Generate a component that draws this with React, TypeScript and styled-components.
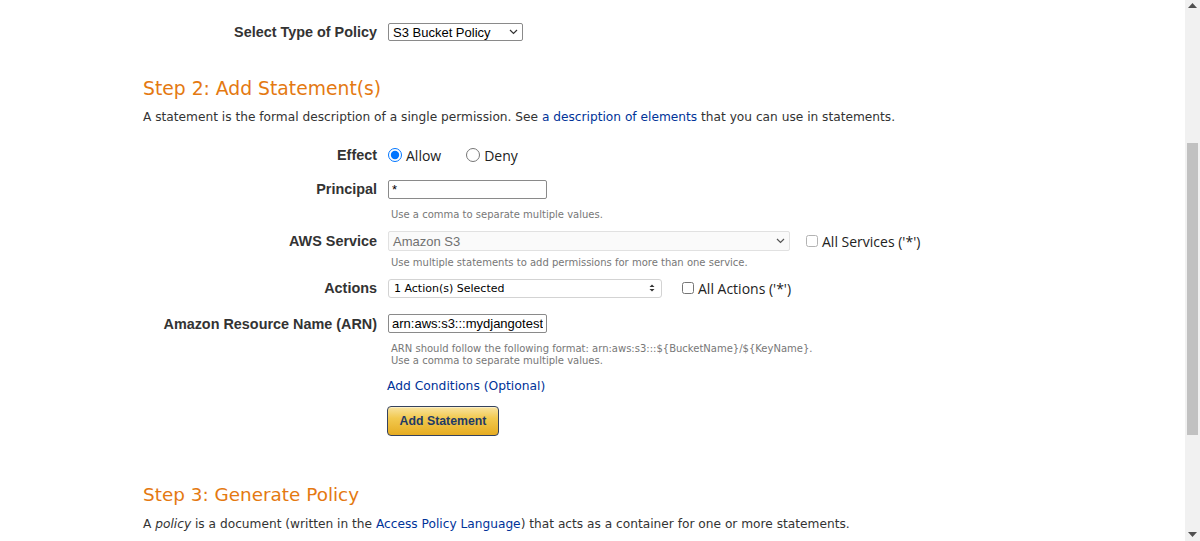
import React from "react";
import styled, { createGlobalStyle } from "styled-components";

const Global = createGlobalStyle`
  html, body { margin: 0; padding: 0; background: #fff; overflow: hidden; }
  body { font-family: "DejaVu Sans", Verdana, sans-serif; color: #333; }
`;

const Page = styled.div`
  width: 1185px;
  height: 541px;
  padding-left: 143px;
  box-sizing: border-box;
  display: flex;
  flex-direction: column;
`;

const Row = styled.div<{ $mt: number; $h?: number }>`
  display: grid;
  grid-template-columns: 234px 1fr;
  column-gap: 11px;
  align-items: center;
  margin-top: ${(p) => p.$mt}px;
  height: ${(p) => (p.$h ? `${p.$h}px` : "auto")};
`;

const Label = styled.div`
  font-family: "Liberation Sans", Arial, sans-serif;
  font-weight: bold;
  font-size: 14.4px;
  color: #333;
  text-align: right;
  white-space: nowrap;
`;

const Controls = styled.div`
  display: flex;
  align-items: center;
  height: 100%;
`;

const SelectBox = styled.div<{ $w: number; $h: number; $variant: "plain" | "disabled" | "multi" }>`
  width: ${(p) => p.$w}px;
  height: ${(p) => p.$h}px;
  box-sizing: border-box;
  display: flex;
  align-items: center;
  justify-content: space-between;
  border: 1px solid
    ${(p) => (p.$variant === "plain" ? "#8a8a8a" : p.$variant === "disabled" ? "#e1e1e1" : "#d3d3d3")};
  border-radius: ${(p) => (p.$variant === "multi" ? 3 : 2)}px;
  background: ${(p) => (p.$variant === "disabled" ? "#fafafa" : "#fff")};
  padding: 0 ${(p) => (p.$variant === "multi" ? 6 : 4)}px 0 ${(p) => (p.$variant === "multi" ? 5 : 4)}px;
  font-family: ${(p) =>
    p.$variant === "multi" ? `"DejaVu Sans", Tahoma, sans-serif` : `"Liberation Sans", Arial, sans-serif`};
  font-size: ${(p) => (p.$variant === "multi" ? "11px" : "13px")};
  color: ${(p) => (p.$variant === "disabled" ? "#707070" : "#000")};
`;

const Heading = styled.h2<{ $mt: number; $size: number }>`
  margin: ${(p) => p.$mt}px 0 0 0;
  font-family: "DejaVu Sans", Verdana, sans-serif;
  font-weight: normal;
  font-size: ${(p) => p.$size}px;
  line-height: 24px;
  color: #e47911;
`;

const Para = styled.p<{ $mt: number }>`
  margin: ${(p) => p.$mt}px 0 0 0;
  font-size: 12.2px;
  line-height: 16px;
  color: #333;
  white-space: nowrap;
`;

const Link = styled.a`
  color: #003399;
  text-decoration: none;
`;

const RadioLabel = styled.label<{ $ml?: number }>`
  display: flex;
  align-items: center;
  margin-left: ${(p) => p.$ml || 0}px;
  font-family: "Open Sans", "Noto Sans", sans-serif;
  font-size: 14px;
  color: #222;
  input { margin: 0 4px 0 0; width: 14px; height: 14px; }
`;

const TextInput = styled.input`
  width: 159px;
  height: 19px;
  box-sizing: border-box;
  border: 1px solid #8a8a8a;
  border-radius: 2px;
  padding: 0 3px;
  font-family: "Liberation Sans", Arial, sans-serif;
  font-size: 13px;
  color: #000;
  margin: 0;
`;

const HintRow = styled.div<{ $mt: number }>`
  display: grid;
  grid-template-columns: 234px 1fr;
  column-gap: 11px;
  margin-top: ${(p) => p.$mt}px;
`;

const Hint = styled.div`
  grid-column: 2;
  padding-left: 3px;
  font-size: 10px;
  line-height: 12px;
  color: #777;
  white-space: nowrap;
`;

const CheckLabel = styled.label<{ $ml: number; $dim?: boolean }>`
  display: flex;
  align-items: center;
  margin-left: ${(p) => p.$ml}px;
  font-family: "Open Sans", "Noto Sans", sans-serif;
  font-size: 14px;
  color: #222;
  white-space: nowrap;
  input { margin: 0 4px 0 0; width: 12px; height: 12px; opacity: ${(p) => (p.$dim ? 0.55 : 1)}; }
`;

const Indented = styled.div<{ $mt: number }>`
  margin-left: 244px;
  margin-top: ${(p) => p.$mt}px;
`;

const LinkLine = styled(Indented)`
  font-size: 12.3px;
  line-height: 18px;
`;

const AddButton = styled.button`
  width: 112px;
  height: 30px;
  border: 1px solid #35425e;
  border-radius: 4px;
  background: linear-gradient(#f8e3a0, #f2c94f 40%, #e6ac22);
  box-shadow: inset 0 1px 0 #fcefc4;
  font-family: "Liberation Sans", Arial, sans-serif;
  font-weight: bold;
  font-size: 12.3px;
  color: #1f3a66;
  padding: 0;
  cursor: pointer;
`;

const Scrollbar = styled.div`
  position: fixed;
  top: 0;
  right: 0;
  width: 15px;
  height: 541px;
  background: #f1f1f1;
`;

const Thumb = styled.div`
  position: absolute;
  left: 2px;
  right: 2px;
  top: 143px;
  height: 292px;
  background: #c1c1c1;
`;

const Arrow = styled.svg<{ $bottom?: boolean }>`
  position: absolute;
  left: 3px;
  ${(p) => (p.$bottom ? "bottom: 3px;" : "top: 3px;")}
`;

const Chevron = ({ color = "#333" }: { color?: string }) => (
  <svg width="9" height="6" viewBox="0 0 9 6">
    <path d="M1 1 L4.5 4.5 L8 1" fill="none" stroke={color} strokeWidth="1.2" />
  </svg>
);

export default function App() {
  return (
    <>
      <Global />
      <Page>
        <Row $mt={23} $h={18}>
          <Label>Select Type of Policy</Label>
          <Controls>
            <SelectBox $w={135} $h={18} $variant="plain">
              <span>S3 Bucket Policy</span>
              <Chevron />
            </SelectBox>
          </Controls>
        </Row>

        <Heading $mt={36} $size={18.75}>Step 2: Add Statement(s)</Heading>
        <Para $mt={8}>
          A statement is the formal description of a single permission. See{" "}
          <Link href="#">a description of elements</Link> that you can use in statements.
        </Para>

        <Row $mt={20} $h={20}>
          <Label>Effect</Label>
          <Controls>
            <RadioLabel>
              <input type="radio" name="effect" defaultChecked />
              Allow
            </RadioLabel>
            <RadioLabel $ml={25}>
              <input type="radio" name="effect" />
              Deny
            </RadioLabel>
          </Controls>
        </Row>

        <Row $mt={14} $h={20}>
          <Label>Principal</Label>
          <Controls>
            <TextInput defaultValue="*" />
          </Controls>
        </Row>
        <HintRow $mt={10}>
          <Hint>Use a comma to separate multiple values.</Hint>
        </HintRow>

        <Row $mt={10} $h={20}>
          <Label>AWS Service</Label>
          <Controls>
            <SelectBox $w={402} $h={20} $variant="disabled">
              <span>Amazon S3</span>
              <Chevron color="#555" />
            </SelectBox>
            <CheckLabel $ml={16} $dim>
              <input type="checkbox" />
              All Services ('*')
            </CheckLabel>
          </Controls>
        </Row>
        <HintRow $mt={6}>
          <Hint>Use multiple statements to add permissions for more than one service.</Hint>
        </HintRow>

        <Row $mt={9} $h={20}>
          <Label>Actions</Label>
          <Controls>
            <SelectBox $w={274} $h={19} $variant="multi">
              <span>1 Action(s) Selected</span>
              <svg width="6" height="8" viewBox="0 0 6 8">
                <path d="M3 0.5 L5.5 3 L0.5 3 Z M0.5 5 L5.5 5 L3 7.5 Z" fill="#333" />
              </svg>
            </SelectBox>
            <CheckLabel $ml={20}>
              <input type="checkbox" />
              All Actions ('*')
            </CheckLabel>
          </Controls>
        </Row>

        <Row $mt={16} $h={19}>
          <Label>Amazon Resource Name (ARN)</Label>
          <Controls>
            <TextInput defaultValue="arn:aws:s3:::mydjangotestbucket" />
          </Controls>
        </Row>
        <HintRow $mt={10}>
          <Hint>
            ARN should follow the following format: arn:aws:s3:::${"{BucketName}"}/${"{KeyName}"}.
            <br />
            Use a comma to separate multiple values.
          </Hint>
        </HintRow>

        <LinkLine $mt={10}>
          <Link href="#">Add Conditions (Optional)</Link>
        </LinkLine>

        <Indented $mt={11}>
          <AddButton>Add Statement</AddButton>
        </Indented>

        <Heading $mt={47} $size={18.4}>Step 3: Generate Policy</Heading>
        <Para $mt={9}>
          A <i>policy</i> is a document (written in the <Link href="#">Access Policy Language</Link>) that
          acts as a container for one or more statements.
        </Para>
      </Page>
      <Scrollbar>
        <Arrow width="9" height="6" viewBox="0 0 9 6">
          <path d="M4.5 0 L9 5 L0 5 Z" fill="#505050" />
        </Arrow>
        <Thumb />
        <Arrow $bottom width="9" height="6" viewBox="0 0 9 6">
          <path d="M0 0 L9 0 L4.5 5 Z" fill="#505050" />
        </Arrow>
      </Scrollbar>
    </>
  );
}
